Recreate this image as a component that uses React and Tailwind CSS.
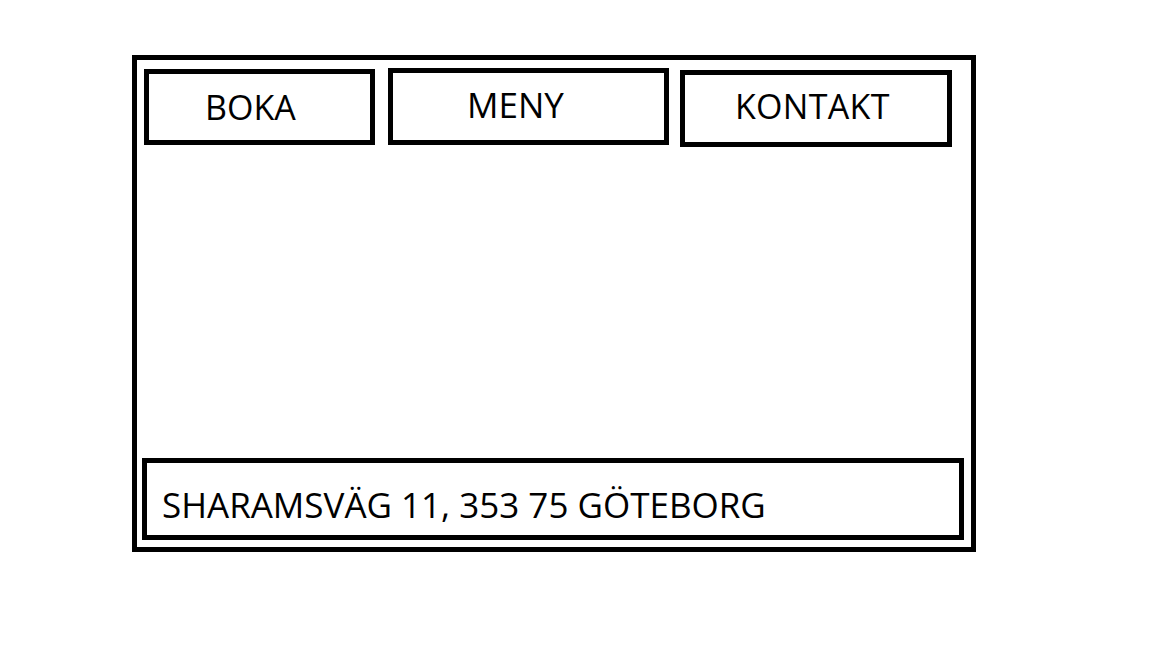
export default function App() {
  return (
    <div className="w-[1152px] h-[648px] bg-white pt-[55px] pl-[132px] font-['Open_Sans',sans-serif] text-black">
      <div className="w-[844px] h-[497px] border-[5px] border-black flex flex-col">
        <div className="flex items-start">
          <div className="ml-[7px] mt-[9px] w-[231px] h-[76px] border-[5px] border-black pl-[56px] pt-[16px] text-[34px] leading-none">
            BOKA
          </div>
          <div className="ml-[13px] mt-[8px] w-[281px] h-[77px] border-[5px] border-black pl-[74px] pt-[14px] text-[35px] leading-none">
            MENY
          </div>
          <div className="ml-[11px] mt-[10px] w-[272px] h-[77px] border-[5px] border-black pl-[50px] pt-[14px] text-[34px] tracking-[0.3px] leading-none">
            KONTAKT
          </div>
        </div>
        <div className="mt-auto mb-[7px] ml-[5px] w-[822px] h-[82px] border-[5px] border-black pl-[15px] pt-[24px] text-[35px] leading-none">
          SHARAMSVÄG 11, 353 75 GÖTEBORG
        </div>
      </div>
    </div>
  );
}
